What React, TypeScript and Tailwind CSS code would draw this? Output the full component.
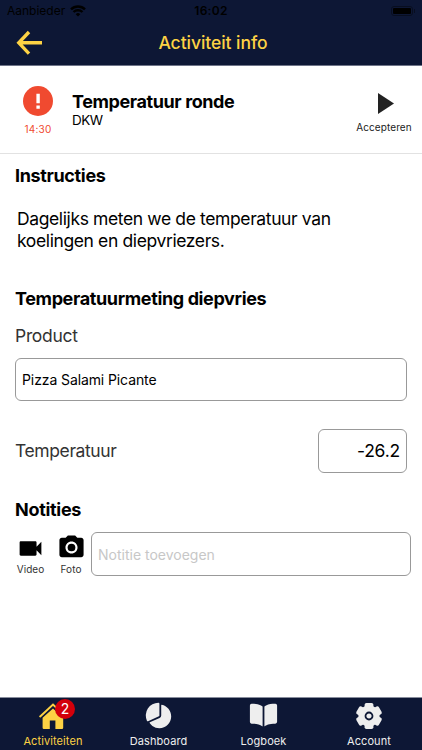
import { MdCameraAlt, MdVideocam } from "react-icons/md";
import { IoBook, IoPieChart } from "react-icons/io5";

const tabs = [
    { label: "Activiteiten", width: "w-[106px]", active: true },
    { label: "Dashboard", width: "w-[105px]", active: false },
    { label: "Logboek", width: "w-[105px]", active: false },
    { label: "Account", width: "w-[106px]", active: false },
];

function HomeIcon() {
    return (
        <svg width="28" height="28" viewBox="0 0 28 28" fill="currentColor">
            <path d="M14 6.6 3.6 15.8V25.8a1.2 1.2 0 0 0 1.2 1.2h6v-8.4h5.6V27H23a1.2 1.2 0 0 0 1.2-1.2V15.8Z" />
            <path d="M1.2 14.4 14 2.6 26.8 14.4" fill="none" stroke="currentColor" strokeWidth="2" strokeLinecap="round" />
            <path d="M19.5 3h4v8l-4-4Z" />
        </svg>
    );
}

function GearIcon() {
    return (
        <svg width="28" height="28" viewBox="-14 -14 28 28" fill="currentColor">
            <circle r="10.6" />
            <rect x="-4.4" y="-13" width="8.8" height="26" rx="1.8" />
            <rect x="-4.4" y="-13" width="8.8" height="26" rx="1.8" transform="rotate(60)" />
            <rect x="-4.4" y="-13" width="8.8" height="26" rx="1.8" transform="rotate(120)" />
            <circle r="3.5" fill="none" stroke="#0d1735" strokeWidth="1.8" />
        </svg>
    );
}

function TabIcon({ label }: { label: string }) {
    if (label === "Activiteiten") return <HomeIcon />;
    if (label === "Dashboard") return <IoPieChart size={29} />;
    if (label === "Logboek") return <IoBook size={29} />;
    return <GearIcon />;
}

function Header() {
    return (
        <header className="h-[66px] bg-[#0d1735] border-b border-[#6e7488]">
            {/* status bar */}
            <div className="h-[22px] px-[7px] grid grid-cols-3 items-center text-black">
                <div className="flex items-center gap-[5px]">
                    <span className="text-[12px]">Aanbieder</span>
                    <svg width="16" height="12" viewBox="0 0 16 12" fill="none" stroke="currentColor" strokeWidth="2.4">
                        <path d="M1 4.3a10 10 0 0 1 14 0M3.5 7a6.5 6.5 0 0 1 9 0" />
                        <path d="M8 11.5 5.7 9.2a3.2 3.2 0 0 1 4.6 0Z" fill="currentColor" stroke="none" />
                    </svg>
                </div>
                <span className="text-center text-[12px] font-semibold tracking-[0.3px]">16:02</span>
                <div className="flex justify-end items-center gap-px">
                    <span className="w-[22px] h-[10px] rounded-[3px] border border-[#080e20] p-px">
                        <span className="block h-full rounded-[1px] bg-black" />
                    </span>
                    <span className="w-px h-1 bg-[#080e20]" />
                </div>
            </div>
            <div className="h-[42px] grid grid-cols-[60px_1fr_56px] items-center text-[#fdd244]">
                <svg className="ml-4" width="27" height="26" viewBox="0 0 27 26" fill="none" stroke="currentColor" strokeWidth="3.4">
                    <path d="M13 2 2.8 12.8 13 23.6M3 12.8h23" />
                </svg>
                <h1 className="text-center text-[17.5px] font-medium tracking-[-0.05px] whitespace-nowrap">Activiteit info</h1>
            </div>
        </header>
    );
}

export default function App() {
    return (
        <div className="w-[422px] h-[750px] flex flex-col bg-white text-black overflow-hidden font-['Inter','Liberation_Sans',sans-serif]">
            <Header />

            {/* activity */}
            <section className="h-[88px] shrink-0 flex border-b border-[#e2e2e2]">
                <div className="w-[76px] pt-5 flex flex-col items-center text-[#f04a30]">
                    <svg width="30" height="30" viewBox="0 0 30 30">
                        <circle cx="15" cy="15" r="15" fill="currentColor" />
                        <path d="M13.4 7.8h3.4v9.4h-3.4zM13.4 19.4h3.4v3.4h-3.4z" fill="white" />
                    </svg>
                    <span className="mt-[6px] text-[10px] leading-[14px] tracking-[0.2px]">14:30</span>
                </div>
                <div className="flex-1 pt-[25px] -ml-1">
                    <h2 className="text-[18px] leading-[22px] font-bold tracking-[-0.4px]">Temperatuur ronde</h2>
                    <p className="-mt-px text-[13.5px] leading-[17px] tracking-[-0.5px]">DKW</p>
                </div>
                <div className="w-[76px] pt-[27px] flex flex-col items-center text-[#222]">
                    <svg className="ml-1" width="16" height="21" viewBox="0 0 16 21" fill="currentColor">
                        <path d="M0 0 16 10.5 0 21Z" />
                    </svg>
                    <span className="mt-[6px] text-[10px] leading-[14px] tracking-[0.1px]">Accepteren</span>
                </div>
            </section>

            <main className="flex-1 pl-[15px] pr-[11px]">
                <h3 className="pt-[11px] text-[18px] leading-[22px] font-bold tracking-[-0.35px]">Instructies</h3>
                <p className="mt-[21px] ml-[2px] text-[17.5px] leading-[22px] tracking-[-0.38px]">
                    Dagelijks meten we de temperatuur van
                    <br />
                    koelingen en diepvriezers.
                </p>
                <h3 className="mt-[36px] text-[18px] leading-[22px] font-bold tracking-[-0.37px]">
                    Temperatuurmeting diepvries
                </h3>
                <div className="mt-[15px] text-[17.5px] leading-[22px] tracking-[-0.3px] text-[#333]">Product</div>
                <input
                    className="mt-[11px] w-[392px] h-[43px] px-[6px] pb-px block rounded-[6px] border border-[#999] text-[14px] tracking-[-0.1px]"
                    defaultValue="Pizza Salami Picante"
                />
                <div className="mt-[28px] mr-1 flex items-center justify-between">
                    <span className="pt-px text-[17.5px] tracking-[-0.4px] text-[#333]">Temperatuur</span>
                    <input
                        className="w-[89px] h-[44px] px-[6px] pb-[2px] rounded-[6px] border border-[#999] text-[17.5px] tracking-[-0.2px] text-right"
                        defaultValue="-26.2"
                    />
                </div>
                <h3 className="mt-[26px] text-[18px] leading-[22px] font-bold tracking-[-0.3px]">Notities</h3>
                <div className="mt-[11px] flex">
                    <div className="w-[31px] pt-[2px] flex flex-col items-center">
                        <MdVideocam size={29} />
                        <span className="text-[10px] leading-[12px] text-[#333]">Video</span>
                    </div>
                    <div className="ml-[10px] w-[30px] pt-[1px] flex flex-col items-center">
                        <MdCameraAlt size={29} />
                        <span className="mt-px text-[10px] leading-[12px] tracking-[0.1px] text-[#333]">Foto</span>
                    </div>
                    <input
                        className="ml-[5px] w-[320px] h-[44px] px-[6px] rounded-[6px] border border-[#999] text-[14px] placeholder:text-[#c7c7c7]"
                        placeholder="Notitie toevoegen"
                    />
                </div>
            </main>

            <nav className="h-[53px] shrink-0 flex bg-[#0d1735] border-t border-[#888d9c]">
                {tabs.map((tab) => (
                    <div
                        key={tab.label}
                        className={`${tab.width} flex flex-col items-center ${tab.active ? "text-[#fdd244]" : "text-[#eee]"}`}
                    >
                        <div className="relative h-[36px] pb-px flex items-center">
                            <TabIcon label={tab.label} />
                            {tab.active && (
                                <span className="absolute left-4 top-[1px] size-5 rounded-full bg-[#d3000b] text-white text-[14px] leading-5 text-center">
                                    2
                                </span>
                            )}
                        </div>
                        <span className="text-[11px] leading-[14px] tracking-[0.1px]">{tab.label}</span>
                    </div>
                ))}
            </nav>
        </div>
    );
}
